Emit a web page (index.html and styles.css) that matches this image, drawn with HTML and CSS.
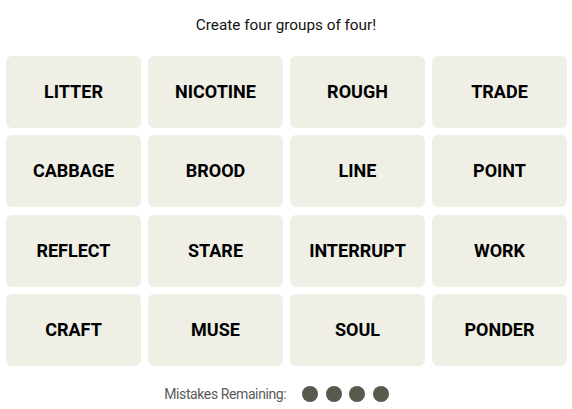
FILE: index.html
```html
<!DOCTYPE html>
<html>
<head>
<meta charset="utf-8">
<link rel="stylesheet" href="styles.css">
</head>
<body>
<div class="game">
  <p class="title">Create four groups of four!</p>
  <div class="board">
    <div class="tile">LITTER</div>
    <div class="tile">NICOTINE</div>
    <div class="tile">ROUGH</div>
    <div class="tile">TRADE</div>
    <div class="tile">CABBAGE</div>
    <div class="tile">BROOD</div>
    <div class="tile">LINE</div>
    <div class="tile">POINT</div>
    <div class="tile">REFLECT</div>
    <div class="tile">STARE</div>
    <div class="tile">INTERRUPT</div>
    <div class="tile">WORK</div>
    <div class="tile">CRAFT</div>
    <div class="tile">MUSE</div>
    <div class="tile">SOUL</div>
    <div class="tile">PONDER</div>
  </div>
  <div class="mistakes">
    <span class="mistakes-label">Mistakes Remaining:</span>
    <span class="dots">
      <span class="dot"></span><span class="dot"></span><span class="dot"></span><span class="dot"></span>
    </span>
  </div>
</div>
</body>
</html>
```
FILE: styles.css
```css
html, body {
  margin: 0;
  padding: 0;
  background: #ffffff;
}
.game {
  width: 572px;
  font-family: Roboto, "Liberation Sans", sans-serif;
  color: #121212;
}
.title {
  margin: 0;
  padding-top: 15px;
  height: 20px;
  line-height: 20px;
  font-size: 15.3px;
  text-align: center;
}
.board {
  margin: 21px 0 0 6px;
  width: 561px;
  display: grid;
  grid-template-columns: repeat(4, 135px);
  grid-auto-rows: 72px;
  column-gap: 7px;
  row-gap: 7.33px;
}
.tile {
  background: #efefe6;
  border-radius: 6px;
  display: flex;
  align-items: center;
  justify-content: center;
  font-weight: 700;
  font-size: 18px;
  color: #000;
  padding-bottom: 1px;
}
.mistakes {
  margin-top: 20px;
  height: 17px;
  display: flex;
  align-items: center;
  justify-content: center;
  gap: 16px;
  padding-right: 19px;
}
.mistakes-label {
  font-size: 14px;
  letter-spacing: -0.4px;
  color: #5a5a5a;
}
.dots {
  display: flex;
  gap: 7.5px;
}
.dot {
  width: 16px;
  height: 16px;
  border-radius: 50%;
  background: #5a594e;
}
```
